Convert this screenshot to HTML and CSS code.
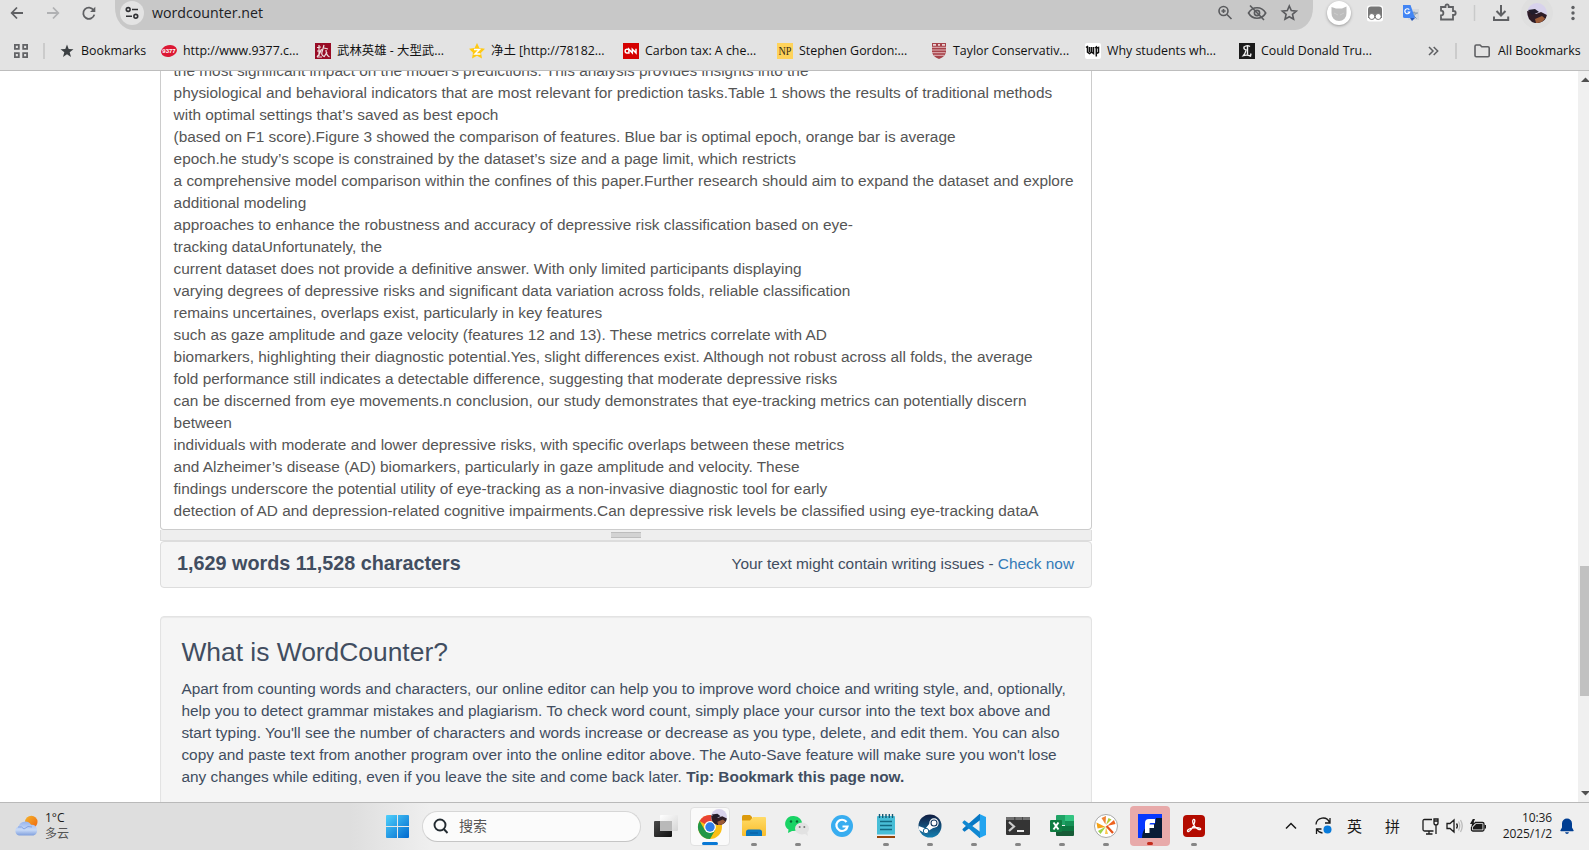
FILE: index.html
```html
<!DOCTYPE html>
<html lang="en">
<head>
<meta charset="utf-8">
<title>WordCounter</title>
<link rel="stylesheet" href="styles.css">
</head>
<body>
<div class="screen">
  <header class="browser">
    <div class="toolbar">
      <svg class="nav-icons" width="115" height="26" viewBox="0 0 115 26" fill="none" stroke-width="1.8">
        <path d="M23 13H12M17 7.5L11.7 13L17 18.5" stroke="#5f6063"/>
        <path d="M47 13H58M53 7.5L58.3 13L53 18.5" stroke="#b0b1b3"/>
        <path d="M93.6 10.2A5.6 5.6 0 1 0 94.3 14.6" stroke="#5f6063"/>
        <path d="M95.3 6.8V12H90.1z" fill="#5f6063"/>
      </svg>
      <div class="omnibox">
        <span class="site-info">
          <svg width="14" height="14" viewBox="0 0 14 14" fill="none" stroke="#303134" stroke-width="1.6">
            <circle cx="3.2" cy="3.5" r="1.9"/><path d="M7 3.5H13M1 10.3H7"/><circle cx="10.8" cy="10.3" r="1.9"/>
          </svg>
        </span>
        <span class="url">wordcounter.net</span>
        <svg class="omni-icons" width="84" height="26" viewBox="0 0 84 26" fill="none" stroke="#5a5b5e" stroke-width="1.6">
          <circle cx="7.5" cy="11" r="4.5"/><path d="M11 14.5L15.5 19M5.4 11H9.6M7.5 8.9V13.1"/>
          <path d="M32.500 13C34.500 9.600 37.500 7.800 41 7.800S47.800 9.600 49.700 13C47.800 16.400 44.800 18.200 41 18.200S34.500 16.400 32.500 13z"/><circle cx="41" cy="13" r="2.600"/><path d="M34 5.500L48 20"/>
          <path d="M73.300 6L75.300 10.600L80.300 11.100L76.500 14.400L77.600 19.200L73.300 16.700L69 19.200L70.100 14.400L66.300 11.100L71.300 10.600z"/>
        </svg>
      </div>
      <span class="cat-badge">
        <svg width="18" height="18" viewBox="0 0 18 18"><path d="M1.500 3L6 4.500H12L16.500 2.500V9A7.500 7.500 0 0 1 9 17A7.500 7.500 0 0 1 1.500 9z" fill="#bdbdbd"/><path d="M4 9L8 11M14 9L10 11" stroke="#ccc"/></svg>
      </span>
      <svg class="ext-icons" width="236" height="30" viewBox="1353 0 236 30" fill="none">
        <rect x="1367" y="5.500" width="16" height="16" rx="2.500" fill="#fff"/><path d="M1368 18V9.500A3 3 0 0 1 1371 6.500H1379A3 3 0 0 1 1382 9.500V18z" fill="#777"/><circle cx="1371.800" cy="16.500" r="3" fill="#fff" stroke="#777"/><circle cx="1378.200" cy="16.500" r="3" fill="#fff" stroke="#777"/>
        <rect x="1408" y="9" width="11" height="11" fill="#d5d8dc"/><path d="M1410 13H1418M1414 11.500V13M1411.500 18L1416.500 13M1412.500 14.500L1416.500 18.500" stroke="#7890aa"/><path d="M1403 5H1410.500L1415 18H1404.500Q1403 18 1403 16.500z" fill="#4285f4"/><path d="M1410 18H1415L1412 21z" fill="#2858b8"/><path d="M1409.300 9.700A2.500 2.500 0 1 0 1409.700 12H1407.500" stroke="#fff" stroke-width="1.200"/>
        <path d="M1441 7H1445.500V6A1.600 1.600 0 0 1 1448.700 6V7H1453V11H1453.700A2 2 0 0 1 1453.700 15H1453V19.500H1441V15.500A2.400 2.400 0 0 0 1441 10.700z" stroke="#5f6063" stroke-width="1.800"/>
        <path d="M1474.500 5V21" stroke="#c9caca" stroke-width="1.500"/>
        <path d="M1501 5V15M1496.500 11L1501 15.500L1505.500 11M1494 16.500V20H1508.200V16.500" stroke="#5f6063" stroke-width="2"/>
        <circle cx="1537" cy="13" r="16" fill="#dfdfdf"/><use href="#avatar" x="1527" y="3" width="20" height="20"/>
        <g fill="#5f6063"><circle cx="1573" cy="7.500" r="1.700"/><circle cx="1573" cy="13" r="1.700"/><circle cx="1573" cy="18.500" r="1.700"/></g>
        <symbol id="avatar" viewBox="0 0 20 20"><circle cx="10" cy="10" r="10" fill="#d8d2ec"/><path d="M.2 8L4 8.500L9 11L14 9L16 10L19.900 12A10 10 0 0 1 2 16Q0 12 .2 8z" fill="#2d1c26"/><path d="M8 16L15 13L18 15.500A10 10 0 0 1 9 20z" fill="#9b5b38"/><path d="M1 7L8 6L12 9L5 12z" fill="#211c2b"/></symbol>
      </svg>
    </div>
    <nav class="bookmarks">
      <svg class="apps" width="14" height="14" viewBox="0 0 14 14" fill="none" stroke="#626366" stroke-width="1.800"><path d="M.9.900h3.900v3.900H.9zM9.200.9h3.900v3.900H9.200zM.9 9.200h3.900v3.900H.9zM9.200 9.200h3.900v3.900H9.200z"/></svg>
      <i class="sep"></i>
      <svg class="bm-star" width="14" height="14" viewBox="0 0 14 14"><path d="M7 .4L8.700 5L13.500 5.200L9.700 8.200L11 12.900L7 10.200L3 12.900L4.300 8.200L.5 5.200L5.300 5z" fill="#3c4043"/></svg>
      <span class="label first">Bookmarks</span>
      <div class="bm"><svg width="16" height="16"><ellipse cx="8" cy="8" rx="8" ry="5.800" fill="#dc1733" transform="rotate(-12 8 8)"/><text x="8" y="10" class="fav f-9377">9377</text></svg><span class="label w1">http://www.9377.c...</span></div>
      <div class="bm"><svg width="16" height="16"><path fill="#980b25" d="M0 0h16v16H0z"/><path d="M2 4.500L6 4M4 2V13M2 8H6M6.500 6Q5 11 2 14M9 2Q8 6 7 9T9 13.500M9 5L13 6M11 7Q11 12 14.500 14M12 9L9 14M2 14H7" stroke="#eee2e2" fill="none" stroke-width="1.200"/></svg><span class="label w2">武林英雄 - 大型武...</span></div>
      <div class="bm"><svg width="16" height="16"><path d="M8 0L10.400 5L16 5.700L12 9.700L13 15.500L8 12.800L3 15.500L4 9.700L0 5.700L5.600 5z" fill="#ffc914"/><path d="M5 6.500H10.500L6 11H11.500" stroke="#fff" stroke-width="1.500" fill="none"/></svg><span class="label w3">净土 [http://78182...</span></div>
      <div class="bm"><svg width="16" height="16"><path fill="#d50000" d="M0 0h16v16H0z"/><path d="M5.300 6.200H3.600Q2.100 6.200 2.100 8T3.600 9.900H5.900V6.200L9.300 9.900V6.200L13 9.900V5.800" stroke="#fff" stroke-width="1.500" fill="none"/></svg><span class="label w4">Carbon tax: A che...</span></div>
      <div class="bm"><svg width="16" height="16"><path fill="#ffd35a" d="M0 0h16v16H0z"/><text x="8" y="12.300" class="fav f-np" textLength="13" lengthAdjust="spacingAndGlyphs">NP</text></svg><span class="label w5">Stephen Gordon:...</span></div>
      <div class="bm"><svg width="16" height="16"><path d="M1 0H15V9Q14 14 8 16Q2 14 1 9z" fill="#a64249"/><path d="M1 4.300H15M1 7H15M1 9.700H14.500M3 12.300H13" stroke="#e3b8bc" stroke-width="1"/><path d="M2 1.800h3m2 0h2m2 0h3" stroke="#ead2d4" stroke-width="1.800"/></svg><span class="label w6">Taylor Conservativ...</span></div>
      <div class="bm"><svg width="16" height="16"><rect width="16" height="16" rx="2" fill="#fff"/><path d="M2.500 3.500V9L4.500 10.500L6.500 9V4M4.500 4V9M6.500 9L8.500 10.500V4M1 4.500L3 3M10 5L11.300 4V13.500M11.300 5L13.500 4.500V9.500L11.300 10.500" stroke="#111" stroke-width="1.500" fill="none"/></svg><span class="label w7">Why students wh...</span></div>
      <div class="bm"><svg width="16" height="16"><path fill="#1b1b1b" d="M0 0h16v16H0z"/><path d="M11 3.500Q8 1.500 5 4Q4.500 6.500 7 7Q6.500 10 4.500 12.500Q8 11.500 11.500 13L12 10.500M8.500 3V11.500" stroke="#f1f1f1" stroke-width="1.400" fill="none"/></svg><span class="label w8">Could Donald Tru...</span></div>
      <svg class="more" width="11" height="10" viewBox="0 0 11 10" fill="none" stroke="#5f6063" stroke-width="1.500"><path d="M1 1L5 5L1 9M5.700 1L9.700 5L5.700 9"/></svg>
      <i class="sep sep2"></i>
      <svg class="folder" width="16" height="14" viewBox="0 0 16 14" fill="none" stroke="#5f6063" stroke-width="1.600"><path d="M1 2.200Q1 1 2.200 1H6L7.800 2.800H14Q15.200 2.800 15.200 4V11.500Q15.200 12.700 14 12.700H2.200Q1 12.700 1 11.500z"/></svg>
      <span class="label w9">All Bookmarks</span>
    </nav>
  </header>

  <div class="viewport">
    <main class="page">
      <section class="editor">
        <div>the most significant impact on the model's predictions. This analysis provides insights into the</div>
        <div>physiological and behavioral indicators that are most relevant for prediction tasks.Table 1 shows the results of traditional methods</div>
        <div>with optimal settings that’s saved as best epoch</div>
        <div>(based on F1 score).Figure 3 showed the comparison of features. Blue bar is optimal epoch, orange bar is average</div>
        <div>epoch.he study’s scope is constrained by the dataset’s size and a page limit, which restricts</div>
        <div>a comprehensive model comparison within the confines of this paper.Further research should aim to expand the dataset and explore</div>
        <div>additional modeling</div>
        <div>approaches to enhance the robustness and accuracy of depressive risk classification based on eye-</div>
        <div>tracking dataUnfortunately, the</div>
        <div>current dataset does not provide a definitive answer. With only limited participants displaying</div>
        <div>varying degrees of depressive risks and significant data variation across folds, reliable classification</div>
        <div>remains uncertaines, overlaps exist, particularly in key features</div>
        <div>such as gaze amplitude and gaze velocity (features 12 and 13). These metrics correlate with AD</div>
        <div>biomarkers, highlighting their diagnostic potential.Yes, slight differences exist. Although not robust across all folds, the average</div>
        <div>fold performance still indicates a detectable difference, suggesting that moderate depressive risks</div>
        <div>can be discerned from eye movements.n conclusion, our study demonstrates that eye-tracking metrics can potentially discern</div>
        <div>between</div>
        <div>individuals with moderate and lower depressive risks, with specific overlaps between these metrics</div>
        <div>and Alzheimer’s disease (AD) biomarkers, particularly in gaze amplitude and velocity. These</div>
        <div>findings underscore the potential utility of eye-tracking as a non-invasive diagnostic tool for early</div>
        <div>detection of AD and depression-related cognitive impairments.Can depressive risk levels be classified using eye-tracking dataA</div>
      </section>
      <div class="grippie"><i></i></div>
      <section class="stats">
        <strong>1,629 words 11,528 characters</strong>
        <span>Your text might contain writing issues - <a>Check now</a></span>
      </section>
      <section class="about">
        <h2>What is WordCounter?</h2>
        <p>Apart from counting words and characters, our online editor can help you to improve word choice and writing style, and, optionally,<br>help you to detect grammar mistakes and plagiarism. To check word count, simply place your cursor into the text box above and<br>start typing. You'll see the number of characters and words increase or decrease as you type, delete, and edit them. You can also<br>copy and paste text from another program over into the online editor above. The Auto-Save feature will make sure you won't lose<br>any changes while editing, even if you leave the site and come back later. <b>Tip: Bookmark this page now.</b></p>
      </section>
    </main>
    <aside class="scrollbar">
      <svg width="9" height="6" viewBox="0 0 9 6"><path d="M1 5L5.500 .5L10 5z" fill="#505050"/></svg>
      <i class="thumb"></i>
      <svg width="9" height="6" viewBox="0 0 9 6"><path d="M1 1H10L5.500 5.500z" fill="#505050"/></svg>
    </aside>
  </div>

  <footer class="taskbar">
    <svg class="weather" width="25" height="22" viewBox="0 0 25 22">
      <defs><linearGradient id="sun" x2="1" y2="1"><stop stop-color="#f4b52c"/><stop offset="1" stop-color="#f0640e"/></linearGradient><linearGradient id="cloud" x2="0" y2="1"><stop stop-color="#98b5ee"/><stop offset=".6" stop-color="#c8daf7"/><stop offset="1" stop-color="#7f9fdd"/></linearGradient></defs>
      <circle cx="17.300" cy="7" r="6.200" fill="url(#sun)"/><path d="M5 20.500A4.700 4.700 0 0 1 4.500 11.500A7 7 0 0 1 17 9.700A5.600 5.600 0 0 1 19.500 20.500z" fill="url(#cloud)"/><path d="M4 12Q8 11 10 14Q14 10 18 12" stroke="#86a5e3" fill="none"/>
    </svg>
    <div class="forecast"><span>1°C</span><span class="sky">多云</span></div>
    <svg class="start" width="23" height="23" viewBox="0 0 23 23"><defs><linearGradient id="win" x2="1" y2="1"><stop stop-color="#4fd1fc"/><stop offset="1" stop-color="#0068ce"/></linearGradient></defs><path d="M0 1Q0 0 1 0H11V11H0zM12 0H22Q23 0 23 1V11H12zM0 12H11V23H1Q0 23 0 22zM12 12H23V22Q23 23 22 23H12z" fill="url(#win)"/></svg>
    <div class="search"><svg width="16" height="16" viewBox="0 0 16 16" fill="none" stroke="#222a30" stroke-width="1.900"><circle cx="7" cy="7" r="5.500"/><path d="M10.800 11L14.500 15"/></svg><span>搜索</span></div>
    <svg class="taskview" width="25" height="24" viewBox="0 0 25 24"><defs><linearGradient id="tv" x2="1" y2="1"><stop stop-color="#4a4a4a"/><stop offset="1" stop-color="#111"/></linearGradient><linearGradient id="tv2" x2="1" y2="1"><stop stop-color="#fff"/><stop offset="1" stop-color="#d5d5d5"/></linearGradient></defs><rect y="7" width="18" height="16" rx="1" fill="url(#tv)"/><rect x="6" y="1" width="18" height="16" rx="1" fill="url(#tv2)"/><path d="M6 7H18V17H6z" fill="#b9b9b9"/></svg>
    <div class="apps-row">
      <div class="app active"><svg width="30" height="30" viewBox="0 0 30 30">
        <circle cx="15" cy="17" r="12" fill="#fbbf16"/><path d="M15 17L4.600 11A12 12 0 0 1 25.400 11z" fill="#ea4335"/><path d="M4.600 11A12 12 0 0 0 15 29L20.200 20L15 17L9.800 20z" fill="#219748"/><path d="M15 11H25.400L20 19z" fill="#fbc21c"/><circle cx="15" cy="17" r="5.900" fill="#fff"/><circle cx="15" cy="17" r="4.700" fill="#2f7de9"/></svg><svg class="profile" width="16" height="16"><use href="#avatar" width="16" height="16"/></svg></div>
      <div class="app run"><svg width="24" height="24" viewBox="0 0 24 24"><defs><linearGradient id="fol" x2="0" y2="1"><stop stop-color="#ffdb68"/><stop offset="1" stop-color="#f9bd2c"/></linearGradient></defs><path d="M0 2.500Q0 1 1.500 1H8L10 3V8H0z" fill="#dc9a0b"/><path d="M0 6.500H8L11 3H23Q24 3 24 4V21Q24 22 23 22H1Q0 22 0 21z" fill="url(#fol)"/><path d="M4 22V18Q4 15.500 6.500 15.500H17.500Q20 15.500 20 18V22z" fill="#0b77bf"/><path d="M8 19H16" stroke="#085a9e"/></svg></div>
      <div class="app run wechat"><svg width="24" height="24" viewBox="0 0 24 24"><path d="M9 2A9 7.500 0 1 1 7 17L3 19L3.500 15.500A8 7.500 0 0 1 9 2z" fill="#19d365"/><g fill="#086b32"><circle cx="6" cy="7.500" r="1.200"/><circle cx="12" cy="7.500" r="1.200"/></g><ellipse cx="17" cy="14.500" rx="7" ry="6" fill="#e2e2e2"/><path d="M19 19L23 22L22 17z" fill="#e2e2e2"/><g fill="#777"><circle cx="14.700" cy="13" r="1"/><circle cx="19.300" cy="13" r="1"/></g></svg></div>
      <div class="app"><svg width="24" height="24" viewBox="0 0 24 24"><circle cx="12" cy="12" r="11" fill="#38adf0"/><path d="M16.500 8A5.600 5.600 0 1 0 17.500 12.500H12.500" stroke="#fff" stroke-width="2.200" fill="none"/></svg></div>
      <div class="app run"><svg width="24" height="24" viewBox="0 0 24 24"><rect x="3" y="2" width="18" height="20" rx="1" fill="#48bed7"/><path d="M5.500 0V4M8.700 0V4M12 0V4M15.300 0V4M18.500 0V4" stroke="#155b75" stroke-width="1.400"/><path d="M6 7.500H18M6 11.500H18M6 15.500H18" stroke="#126982" stroke-width="1.500"/><path d="M3 20.500H21V22H3z" fill="#eee"/><path d="M3 22H21V24H3z" fill="#994409"/></svg></div>
      <div class="app run"><svg width="24" height="24" viewBox="0 0 24 24"><defs><linearGradient id="stm" x2="0" y2="1"><stop stop-color="#101b3f"/><stop offset="1" stop-color="#147fb1"/></linearGradient></defs><circle cx="12" cy="12" r="11.500" fill="url(#stm)"/><path d="M.6 12L7.500 14.500L12 9L20 11L11 16.500L8 20L1.200 16z" fill="#fff"/><circle cx="16" cy="9" r="4.700" fill="#fff"/><circle cx="16" cy="9" r="3" fill="#fff" stroke="#14385e" stroke-width="1.100"/><circle cx="8" cy="17" r="2.700" fill="#fff" stroke="#15608c" stroke-width="1"/></svg></div>
      <div class="app run"><svg width="24" height="24" viewBox="0 0 24 24"><path d="M17.500 0L24 3V21L17.500 24z" fill="#23a4ef"/><path d="M17.500 0L.800 14.800Q0 15.500.800 16.300L2.500 17.800L18 6.200V0z" fill="#0878c4"/><path d="M17.500 24L.800 9.200Q0 8.500.800 7.700L2.500 6.200L18 17.800V24z" fill="#1088d2"/></svg></div>
      <div class="app run"><svg width="24" height="24" viewBox="0 0 24 24"><path d="M1 3H23Q24 3 24 4V20Q24 21 23 21H1Q0 21 0 20V4Q0 3 1 3z" fill="#343434"/><path d="M0 6V4Q0 3 1 3H23Q24 3 24 4V6z" fill="#707070"/><path d="M8 3h1.500v3H8zm8 0h1v3h-1z" fill="#484848"/><path d="M3 8L8 12.500L3 17" stroke="#ccc" stroke-width="2.200" fill="none"/><path d="M11 17H18" stroke="#fff" stroke-width="1.800"/></svg></div>
      <div class="app run"><svg width="24" height="24" viewBox="0 0 24 24"><path d="M6 2Q6 1 7 1H15V11H6z" fill="#20a366"/><path d="M15 1H23Q24 1 24 2V7H15z" fill="#33c481"/><path d="M15 7H24V12H15z" fill="#169156"/><path d="M6 12H15V17H6zM15 12H24V17H15z" fill="#0d7640"/><path d="M6 17H24V21Q24 22 23 22H7Q6 22 6 21z" fill="#175c37"/><rect y="6" width="12" height="12" rx="1" fill="#107c41"/><path d="M3.500 8.500L8.500 15.500M8.500 8.500L3.500 15.500" stroke="#fff" stroke-width="2"/></svg></div>
      <div class="app run"><svg width="24" height="24" viewBox="0 0 24 24"><circle cx="12" cy="12" r="11.500" fill="#fff" stroke="#a8a8a8"/><path d="M11.500 13L2.500 8.500L3.500 14.500z" fill="#f5a216"/><path d="M11.500 10.500L7.500 4L12 2z" fill="#ee8436"/><path d="M12 11L14.500 4L17.500 5.500z" fill="#b2cc35"/><path d="M13 12L20 6L21.500 10z" fill="#ee611d"/><path d="M12 12.500L6.500 20L4 17z" fill="#9bd449"/><path d="M12 13L11 20H14z" fill="#f9c74c"/><path d="M12.500 12L19 19" stroke="#e3541c" stroke-width="2.300"/></svg></div>
      <div class="app run alert"><svg width="24" height="24" viewBox="0 0 24 24"><path fill="#0638ff" d="M0 0h24v24H0z"/><path d="M24 4L18 4L17 10L9 13Q4 16 4 24H24z" fill="#081b36"/><path d="M7 19V9Q7 5 11 5H17V9H12.500Q11.500 9 11.500 10.500H16V14H11.500V19z" fill="#fff"/></svg></div>
      <div class="app run"><svg width="24" height="24" viewBox="0 0 24 24"><rect x="1" y="1" width="22" height="22" rx="4" fill="#b30b00"/><path d="M11.500 5.500C14 5 12.500 10 10.500 13.500C8 18 5 18.500 5.500 16.500C6.500 14 16 12.500 18.500 14.500C19.500 17 14 15.500 11.500 10.500C10.500 8 10.500 6 11.500 5.500z" stroke="#fff" stroke-width="1.300" fill="none"/></svg></div>
    </div>
    <div class="tray">
      <svg width="12" height="8" viewBox="0 0 12 8" fill="none" stroke="#191919" stroke-width="1.500"><path d="M1 6.500L6 1.500L11 6.500"/></svg>
      <svg class="sync" width="17" height="18" viewBox="0 0 17 18" fill="none" stroke="#1b1b1b" stroke-width="1.300"><path d="M1 7.500A7 7 0 0 1 14.500 5.500M15 1V6H10M1.500 17V12H6.500M2 12.500A7 7 0 0 0 7.500 16"/><circle cx="12.500" cy="12.500" r="4" fill="#087bdb" stroke="none"/></svg>
      <span class="ime">英</span><span class="ime ime2">拼</span>
      <svg class="net" width="17" height="17" viewBox="0 0 17 17" fill="none" stroke="#1b1b1b" stroke-width="1.300"><path d="M10 1.500H2.500Q1 1.500 1 3V11.500Q1 13 2.500 13H11.500M7 13V16M4 16H10.500M12 1H16V5Q16 7 14 7Q12 7 12 5zM12 3H16M14 7V16"/></svg>
      <svg class="vol" width="17" height="16" viewBox="0 0 17 16" fill="none" stroke="#1b1b1b" stroke-width="1.300"><path d="M1 5.500H4L8 2V14L4 10.500H1zM10.500 5.500Q12.300 8 10.500 10.500"/><path d="M12.500 3.500Q15 8 12.500 12.500M14.500 2Q18 8 14.500 14" stroke="#bbb"/></svg>
      <svg class="bat" width="17" height="14" viewBox="0 0 17 14"><path d="M5 3.500H12.500Q14 3.500 14 5V10.500Q14 12 12.500 12H3Q1.500 12 1.500 10.500V8" fill="none" stroke="#1b1b1b" stroke-width="1.300"/><path d="M6 5H12.500V10.500H3V8zM14.500 6H16V9.500H14.500zM2.800 0L0 5H2L1 9L6 3.500H3.600L5 0z" fill="#1b1b1b"/></svg>
      <div class="clock"><span>10:36</span><span>2025/1/2</span></div>
      <svg class="bell" width="14" height="17" viewBox="0 0 14 17" fill="#003e92"><path d="M7 .5A5 5 0 0 0 2 5.500V9.500L.3 12.500Q.3 13.300 1 13.300H13Q13.700 13.300 13.700 12.500L12 9.500V5.500A5 5 0 0 0 7 .5zM5 14.300H9Q8.500 16 7 16T5 14.300z"/></svg>
    </div>
  </footer>
</div>
</body>
</html>
```
FILE: styles.css
```css
* { box-sizing: border-box; }
body { margin: 0; font-family: "Liberation Sans", Arial, sans-serif; }
svg { display: block; flex: none; }
.screen { width: 1589px; height: 850px; overflow: hidden; display: flex; flex-direction: column; background: #fff; white-space: nowrap; }

/* Browser chrome */
.browser { height: 71px; flex: none; background: #e3e3e3; border-bottom: 1px solid #bdbdbd; font-family: "Open Sans", "Noto Sans CJK SC", sans-serif; color: #111; }
.toolbar { height: 30px; display: flex; align-items: flex-start; overflow: hidden; }
.omnibox { width: 1198px; height: 30px; background: #c8c8c8; border-radius: 0 0 18px 18px / 0 0 22px 22px; display: flex; align-items: flex-start; padding-left: 5px; }
.site-info { width: 24px; height: 24px; margin-top: 1px; border-radius: 50%; background: #e3e3e3; display: flex; align-items: center; justify-content: center; }
.url { font-size: 14.2px; line-height: 26px; margin-left: 8px; color: #202124; }
.omni-icons { margin-left: auto; margin-right: 13px; }
.cat-badge { width: 24px; height: 24px; border-radius: 50%; background: #fff; box-shadow: 0 1px 3px #999; margin: 1px 2px 0 14px; display: flex; align-items: center; justify-content: center; }
.bookmarks { height: 40px; padding-top: 1px; display: flex; align-items: center; font-size: 12.4px; }
.apps { margin-left: 14px; }
.sep { width: 2px; height: 16px; background: #cbcbcb; margin-left: 15px; }
.bm-star { margin-left: 15px; }
.label { line-height: 20px; }
.first { width: 80px; margin-left: 7px; }
.bm { width: 154px; display: flex; align-items: center; gap: 6px; flex: none; }
.fav { text-anchor: middle; }
.f-9377 { font: bold 6px "Liberation Sans", sans-serif; fill: #fff; }
.f-np { font: 13px "Liberation Serif", serif; fill: #332c14; }
.more { margin-left: 35px; }
.sep2 { margin-left: 16px; }
.folder { margin-left: 17px; }
.w9 { margin-left: 8px; }

/* Web page */
.viewport { height: 731px; flex: none; display: flex; justify-content: space-between; overflow: hidden; font-size: 15.4px; line-height: 22px; }
.page { width: 932px; margin-left: 160px; }
.editor { height: 459px; display: flex; flex-direction: column; justify-content: flex-end; overflow: hidden; border: 1px solid #ccc; border-top: 0; border-radius: 0 0 4px 4px; padding: 0 13px 7px 12.6px; color: #555; }
.editor div { flex: none; }
.grippie { height: 11px; background: #eee; border: 1px solid #ddd; border-top: 0; display: flex; justify-content: center; align-items: center; }
.grippie i { width: 30px; height: 6px; background: linear-gradient(#bdbdbd 1px, #d3d3d3 1px 5px, #bdbdbd 5px); }
.stats { height: 47px; background: #f5f5f5; border: 1px solid #ddd; border-radius: 4px; padding: 0 17px 2px 16px; display: flex; align-items: center; justify-content: space-between; color: #414d60; }
.stats strong { font-size: 19.8px; padding-bottom: 2px; }
.stats span { padding-top: 1px; }
.stats a { color: #337ab7; }
.about { height: 250px; margin-top: 28px; background: #f5f5f5; border: 1px solid #e3e3e3; border-radius: 4px; padding: 21px 20px 0 20.4px; color: #414d60; box-shadow: inset 0 1px 1px rgba(0,0,0,.05); }
.about h2 { margin: 0 0 11px; font-size: 26.4px; font-weight: 400; line-height: 29px; }
.about p { margin: 0; }
.scrollbar { width: 11px; background: #f0f0f0; padding: 6px 0 6px 2px; display: flex; flex-direction: column; }
.thumb { height: 130px; margin: 483px 0 auto; background: #c1c1c1; }

/* Taskbar */
.taskbar { height: 48px; border-top: 1px solid #b9b9b9; background: linear-gradient(90deg, #dedede 0 350px, #efefef 430px); display: flex; align-items: center; padding-bottom: 1px; font-family: "Open Sans", "Noto Sans CJK SC", sans-serif; color: #1b1b1b; }
.weather { margin-left: 14px; }
.forecast { width: 341px; margin-left: 6px; font-size: 12px; line-height: 16px; display: flex; flex-direction: column; }
.sky { color: #555; }
.search { width: 219px; height: 31px; margin-left: 13px; border: 1px solid #d6d6d6; border-bottom-color: #c5c5c5; border-radius: 16px; background: #fbfbfb; display: flex; align-items: center; gap: 10px; padding: 0 0 1px 10px; font-size: 14px; line-height: 20px; color: #555; }
.taskview { margin-left: 13px; }
.apps-row { display: flex; margin-left: 9px; }
.app { width: 44px; height: 47px; position: relative; display: flex; align-items: center; justify-content: center; }
.active { width: 40px; height: 39px; margin: 4px 2px; background: #fafafa; border: 1px solid #e1e1e1; border-radius: 4px; }
.wechat svg { margin-right: 2px; }
.profile { position: absolute; left: 20px; top: 1px; }
.app::after { position: absolute; bottom: 4px; left: 19px; width: 6px; height: 3px; border-radius: 2px; background: #868686; }
.run::after { content: ""; }
.active::after { content: ""; width: 16px; left: 11px; bottom: 0; background: #0878d5; }
.active > svg:first-child { margin-top: -3px; }
.alert { width: 40px; height: 40px; margin: 3px 2px; background: #e8aaaa; border-radius: 4px; }
.alert::after { left: 17px; bottom: 1px; background: #c42b1c; }
.tray { display: flex; align-items: center; margin-left: 69px; }
.sync { margin-left: 18px; }
.ime { width: 16px; margin-left: 15px; font-size: 15px; line-height: 20px; padding-bottom: 1px; }
.ime2 { margin-left: 22px; }
.net { margin-left: 21px; }
.vol { margin-left: 7px; }
.bat { margin-left: 7px; }
.clock { width: 65px; display: flex; flex-direction: column; align-items: flex-end; font-size: 12px; line-height: 16px; letter-spacing: -.1px; }
.bell { margin-left: 8px; }
```
